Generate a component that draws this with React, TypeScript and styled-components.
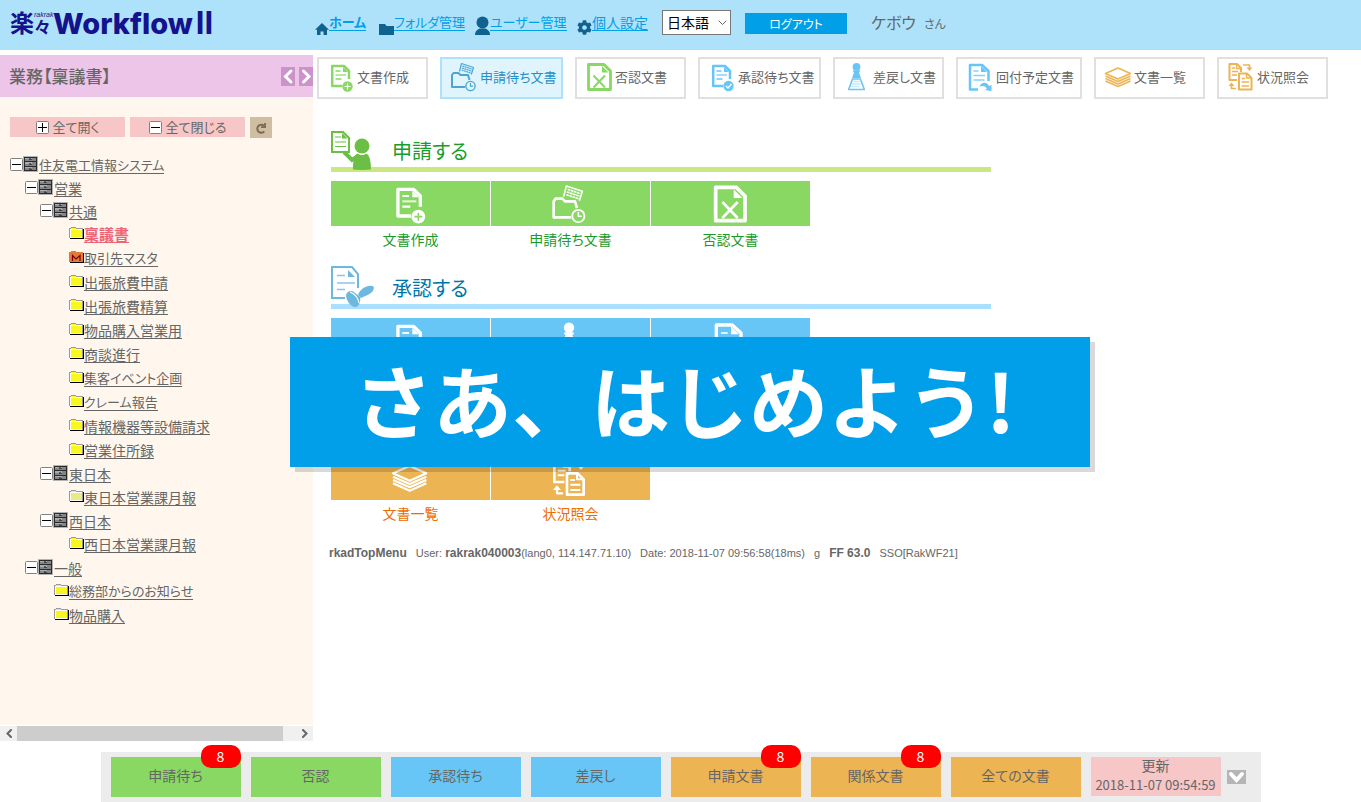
import React from 'react';
import styled, { createGlobalStyle } from 'styled-components';
import { FaCog } from 'react-icons/fa';

const GlobalStyle = createGlobalStyle`
  *, *::before, *::after { box-sizing: border-box; }
  body {
    margin: 0;
    background: #fff;
    color: #666;
    font: 14px/20px "Noto Sans CJK JP", sans-serif;
    font-feature-settings: "palt";
  }
  button, select { font: inherit; font-feature-settings: inherit; color: inherit; border: 0; border-radius: 0; padding: 0; cursor: pointer; }
  ul { list-style: none; margin: 0; padding: 0; }
  h1, h2, p { margin: 0; font-weight: 400; }
  svg { display: block; flex: none; }
`;

const green = '#88d863';
const blue = '#68c6f7';
const orange = '#edb454';
const sky = '#009fe8';
const pink = '#f7c6c7';

const Page = styled.div`
  position: relative;
  min-height: 100vh;
  display: flex;
  flex-direction: column;
`;

/* ---------- header ---------- */
const Header = styled.header`
  height: 50px;
  margin-bottom: 5px;
  padding: 0 10px;
  display: flex;
  align-items: flex-start;
  background: #aee2fb;
`;
const Logo = styled.h1`
  width: 305px;
  display: flex;
  color: #14128c;
  padding-top: 6px;
  white-space: nowrap;
`;
const LogoKanji = styled.span`
  width: 24px;
  font-size: 24px;
  font-weight: 700;
  line-height: 32px;
`;
const LogoSide = styled.span`
  width: 19px;
  display: flex;
  flex-direction: column;
  padding-top: 5px;
  font-size: 17px;
  font-weight: 700;
  line-height: 17px;
`;
const LogoRuby = styled.small`
  font: italic 7px/7px "Liberation Sans", sans-serif;
`;
const LogoWord = styled.span`
  display: flex;
  align-items: baseline;
  gap: 3px;
  font: 800 29px/34px Inter, sans-serif;
  b { font-size: 31px; font-weight: 700; }
`;
const Nav = styled.nav`
  display: flex;
  gap: 13px;
  padding-top: 13px;
`;
const NavLink = styled.a<{ $w: number; $bold?: boolean; $kana?: boolean }>`
  display: flex;
  align-items: flex-end;
  width: ${p => p.$w}px;
  height: 22px;
  color: ${sky};
  font-size: ${p => (p.$kana ? 13 : 14)}px;
  font-weight: ${p => (p.$bold ? 700 : 400)};
  text-decoration: none;
  white-space: nowrap;
  svg { color: #10628f; }
  span {
    line-height: 18px;
    height: 18px;
    margin-bottom: 4px;
    border-bottom: 1px solid ${sky};
  }
`;
const Language = styled.label`
  position: relative;
  margin: 10px 14px 0;
  display: flex;
  align-items: center;
  svg { position: absolute; right: 4px; pointer-events: none; }
`;
const LanguageSelect = styled.select`
  appearance: none;
  width: 69px;
  height: 25px;
  padding: 0 4px 2px;
  border: 1px solid #777;
  background: #fff;
  color: #000;
`;
const Logout = styled.button`
  width: 102px;
  height: 21px;
  margin: 13px 24px 0 0;
  background: ${sky};
  color: #fff;
  font-size: 12px;
  line-height: 18px;
`;
const UserName = styled.p`
  display: flex;
  gap: 8px;
  align-items: baseline;
  padding-top: 12px;
  font-size: 16px;
  small { font-size: 12px; }
`;

/* ---------- side ---------- */
const Middle = styled.div`
  flex: 1;
  display: flex;
`;
const Side = styled.aside`
  width: 313px;
  flex: none;
  display: flex;
  flex-direction: column;
`;
const SideTitle = styled.div`
  height: 42px;
  padding-left: 9px;
  display: flex;
  align-items: center;
  gap: 4px;
  background: #edc5e8;
  h2 { flex: 1; font-size: 17px; font-weight: 500; line-height: 24px; }
`;
const ArrowButton = styled.button`
  width: 14px;
  height: 19px;
  background: #cc93cb;
  color: #fff;
`;
const SideBody = styled.div`
  flex: 1;
  margin-bottom: 1px;
  padding: 20px 10px 0;
  background: #fff7ed;
`;
const TreeTools = styled.div`
  display: flex;
  gap: 5px;
  margin-bottom: 14px;
`;
const ToolButton = styled.button`
  width: 115px;
  height: 20px;
  display: flex;
  align-items: center;
  justify-content: center;
  gap: 4px;
  background: ${pink};
  font-size: 13px;
  line-height: 18px;
`;
const RefreshButton = styled.button`
  width: 22px;
  height: 21px;
  display: grid;
  place-items: center;
  background: #d0bea3;
  color: #7b6a58;
`;
const Branch = styled.ul`
  margin-top: -1px;
  padding-left: 15px;
`;
const TreeRow = styled.div<{ $leaf?: boolean }>`
  display: flex;
  align-items: center;
  height: 24px;
  padding-left: ${p => (p.$leaf ? 14 : 0)}px;
  white-space: nowrap;
`;
const Toggle = styled.button`
  width: 13px;
  height: 15px;
  background: none;
`;
const TreeLink = styled.a<{ $active?: boolean; $leaf?: boolean; $kana?: boolean }>`
  margin-left: ${p => (p.$leaf ? 0 : 1)}px;
  height: 18px;
  margin-top: 1px;
  line-height: 18px;
  color: ${p => (p.$active ? '#ee6477' : '#666')};
  font-size: ${p => (p.$active ? 15 : p.$kana ? 13 : 14)}px;
  font-weight: ${p => (p.$active ? 700 : 400)};
  text-decoration: none;
  border-bottom: 1px solid;
`;
const ScrollBar = styled.div`
  height: 15px;
  display: flex;
  background: #f0f0f0;
`;
const ScrollArrow = styled.button`
  width: 17px;
  display: grid;
  place-items: center;
  background: none;
`;
const ScrollTrack = styled.div`
  flex: 1;
  padding-right: 13px;
`;
const ScrollThumb = styled.div`
  height: 100%;
  background: #cdcdcd;
`;

/* ---------- main ---------- */
const Main = styled.main`
  flex: 1;
  min-width: 0;
  padding: 2px 4px 0;
`;
const Toolbar = styled.div`
  display: flex;
  gap: 12px;
  margin-bottom: 29px;
`;
const ToolbarButton = styled.button<{ $w: number; $active?: boolean }>`
  width: ${p => p.$w}px;
  height: 42px;
  display: flex;
  flex: none;
  align-items: center;
  padding: 0 0 2px 8px;
  border: 2px solid ${p => (p.$active ? '#ade2fb' : '#e0e0e0')};
  background: ${p => (p.$active ? '#e0f4fe' : '#fff')};
  color: ${p => (p.$active ? '#2590c8' : '#666')};
  font-size: 13px;
  white-space: nowrap;
`;
const IconTint = styled.span<{ $color: string }>`
  color: ${p => p.$color};
`;
const Section = styled.section`
  max-width: 674px;
  padding-left: 14px;
  margin-bottom: 11px;
`;
const SectionHead = styled.div<{ $line: string; $color: string }>`
  display: flex;
  align-items: flex-end;
  height: 44px;
  margin-bottom: 9px;
  border-bottom: 5px solid ${p => p.$line};
  h2 { color: ${p => p.$color}; font-size: 20px; line-height: 32px; }
`;
const SectionIcon = styled.span`
  width: 61px;
  margin-bottom: -3px;
`;
const Cards = styled.div`
  display: flex;
  gap: 1px;
`;
const Card = styled.a<{ $bg: string; $color: string }>`
  width: 159px;
  height: 73px;
  color: ${p => p.$color};
  line-height: 26px;
  text-align: center;
  text-decoration: none;
  > span {
    display: flex;
    align-items: center;
    justify-content: center;
    height: 45px;
    background: ${p => p.$bg};
    color: #fff;
  }
`;
const Meta = styled.p`
  display: flex;
  align-items: baseline;
  gap: 9px;
  padding: 4px 12px 0;
  font: 11px/20px "Liberation Sans", sans-serif;
  white-space: nowrap;
  b { font-size: 12px; }
`;

/* ---------- banner ---------- */
const Banner = styled.div`
  position: absolute;
  top: 337px;
  left: 290px;
  width: 800px;
  height: 130px;
  padding-left: 64px;
  background: #019fe9;
  box-shadow: 5px 5px 0 rgba(0, 0, 0, 0.15);
  color: #fff;
  font-size: 79px;
  font-weight: 700;
  font-feature-settings: normal;
  line-height: 124px;
  white-space: nowrap;
`;

/* ---------- footer ---------- */
const Footer = styled.footer`
  display: flex;
  justify-content: center;
  padding-top: 11px;
`;
const FooterBar = styled.div`
  width: 1160px;
  height: 50px;
  padding: 5px 10px;
  display: flex;
  gap: 10px;
  background: #ececec;
`;
const StatusButton = styled.button<{ $bg: string }>`
  position: relative;
  width: 130px;
  height: 40px;
  background: ${p => p.$bg};
  padding-bottom: 4px;
`;
const Badge = styled.span`
  position: absolute;
  top: -12px;
  right: 0;
  width: 40px;
  height: 23px;
  border-radius: 10px;
  background: #f00;
  color: #fff;
  line-height: 22px;
`;
const UpdateButton = styled.button`
  width: 130px;
  height: 39px;
  display: flex;
  flex-direction: column;
  align-items: center;
  background: ${pink};
  line-height: 16px;
  time { font-size: 13px; line-height: 24px; white-space: nowrap; }
`;
const CollapseButton = styled.button`
  align-self: center;
  width: 19px;
  height: 14px;
  margin-left: -4px;
  background: #b5b5b5;
  color: #fff;
`;

/* ---------- icons ---------- */
type IconName = 'create' | 'pending' | 'denied' | 'approve' | 'sendback' | 'route' | 'list' | 'status';

const sheet = (
  <>
    <path d="M15 24H5.200V4H17l5 5v8" strokeWidth="2.500" />
    <path d="M16 5v5H21z" fill="currentColor" stroke="none" />
    <path d="M8.500 9h5M8.500 17h6" strokeWidth="1.600" />
    <path d="M8.500 13h10.500" strokeWidth="1.600" opacity=".75" />
  </>
);

const drawings: Record<IconName, React.ReactNode> = {
  create: (
    <>
      {sheet}
      <circle cx="20.500" cy="24.500" r="5.200" fill="currentColor" stroke="none" />
      <path className="cut" d="M20.500 21.500v6M17.500 24.500h6" />
    </>
  ),
  approve: (
    <>
      {sheet}
      <circle cx="20.500" cy="24" r="5.200" fill="currentColor" stroke="none" />
      <path className="cut" d="M18 24l2 2 3.500-4" />
    </>
  ),
  pending: (
    <>
      <path d="M15 25H2V13l1.500-2h5l2 2H18l1.500 5" strokeWidth="2" />
      <path d="M9.500 9.500L11.500 1.500l12 4-2.200 7" strokeWidth="1.200" />
      <path d="M12.500 4l9.500 3.200M12 6l9.500 3.200M11.500 8l9.500 3.200" strokeWidth="1.200" strokeDasharray="2 .4" />
      <circle cx="20.500" cy="24" r="4.600" strokeWidth="1.400" />
      <path d="M20.500 21v3.200H23" strokeWidth="1.200" />
    </>
  ),
  denied: (
    <>
      <path d="M3.500 2.500H19l6.500 6.500v18.500h-22z" strokeWidth="2.800" />
      <path d="M17 4v6.500h6.500z" fill="currentColor" stroke="none" />
      <path d="M8.500 13.500l11.500 12M20 13.500l-11.500 12" strokeWidth="2" />
    </>
  ),
  sendback: (
    <>
      <circle cx="13.500" cy="5" r="3.900" fill="currentColor" stroke="none" />
      <path d="M10 8.500h7v1.500l-1 .5 2 5.500H9l2-5.500-1-.5z" fill="currentColor" stroke="none" />
      <path d="M9.500 17h8l3.800 10.500H5.700z" strokeWidth="1.600" />
      <path d="M10 19.500h7M9 22h9M8.500 24.500h8" strokeWidth="1.500" opacity=".4" />
    </>
  ),
  route: (
    <>
      <path d="M12 27.500H4V3h12l6.500 6v10" strokeWidth="2.500" />
      <path d="M15 4v6h6z" fill="currentColor" stroke="none" />
      <path d="M7.500 9h5M7.500 13.500H19M7.500 18h11" strokeWidth="1.500" opacity=".8" />
      <path d="M13.500 24.500c2-4.500 7-5 9.500-.5l2.500-1v6l-6.500-1 2-1.500c-2-3-5-3-7.500-2z" fill="currentColor" stroke="none" />
    </>
  ),
  list: (
    <>
      <path d="M14 6L26.500 11.500 14 17 1.500 11.500z" strokeWidth="1.600" />
      <path d="M1.500 14L14 19.500 26.500 14M1.500 16.500L14 22l12.500-5.500M1.500 19L14 24.500 26.500 19" strokeWidth="1.600" />
    </>
  ),
  status: (
    <>
      <path d="M10 18H2.500V2H10l4 4v4" strokeWidth="2" />
      <path d="M9.500 2v4.500H14" strokeWidth="1.500" />
      <path d="M5 6h3M5 9.500h6M5 13h5" strokeWidth="1.500" />
      <path d="M12 11.500h8l4.500 4.500v11.500H12z" strokeWidth="2" />
      <path d="M19.500 11.500V16h5" strokeWidth="1.500" />
      <path d="M14.500 16.500H18M14.500 20h7.500M14.500 24h7.500" strokeWidth="1.500" />
      <path d="M16 3h6.500v3M9 26.500H4.500V23" strokeWidth="1.700" />
      <path d="M19.500 5.500h6l-3 3.500zM1.500 24h6l-3-3.500z" fill="currentColor" stroke="none" />
    </>
  ),
};

const DocSvg = styled.svg<{ $cut: string }>`
  fill: none;
  stroke: currentColor;
  stroke-linejoin: round;
  .cut { stroke: ${p => p.$cut}; stroke-width: 1.2px; }
`;
const DocIcon = ({ name, size, cut = '#fff' }: { name: IconName; size: number; cut?: string }) => (
  <DocSvg $cut={cut} width={size} height={size} viewBox="0 0 30 30">{drawings[name]}</DocSvg>
);

const Box = ({ plus }: { plus?: boolean }) => (
  <svg width="13" height="13" viewBox="0 0 13 13" fill="none">
    <rect x=".5" y=".5" width="12" height="12" rx="1" fill="#fff" stroke="#808080" />
    <path d={plus ? 'M2 6.500h9M6.500 2v9' : 'M2 6.500h9'} stroke="#000" />
  </svg>
);
const Cabinet = () => (
  <svg width="15" height="16" viewBox="0 0 15 16" shapeRendering="crispEdges">
    <path fill="#b4b4b4" d="M0 0h15v16H0z" />
    <path fill="#2a2a2a" d="M1 1h13v14H1z" />
    <path fill="#858585" d="M2 2h11v3H2zM2 6h11v4H2zM2 11h11v3H2z" />
    <path fill="#adadad" d="M2 2h7v1H2zM2 6h7v2H2zM2 11h7v1H2z" />
    <path fill="#444" d="M6 3h3v1H6zM6 8h3v1H6zM6 13h3v1H6z" />
    <path fill="#47607f" d="M6 2h2v1H6zM6 7h2v1H6zM6 12h2v1H6z" />
  </svg>
);
const Folder = () => (
  <svg width="15" height="14" viewBox="0 0 15 14" shapeRendering="crispEdges">
    <defs>
      <pattern id="dither" width="2" height="2" patternUnits="userSpaceOnUse">
        <path fill="#fcfa20" d="M0 0h2v2H0z" />
        <path fill="#e8e680" d="M0 0h1v1H0zM1 1h1v1H1z" />
      </pattern>
    </defs>
    <path fill="#000" d="M1 12h13V3h1v10H1z" />
    <path fill="#999" d="M0 2h2V1h5v1h7v10H0z" />
    <path fill="#fff" d="M1 3h12v9H1z" />
    <path fill="url(#dither)" d="M2 2h5v1H2zM2 4h11v7H2z" />
  </svg>
);
const MasterFolder = () => (
  <svg width="15" height="14" viewBox="0 0 15 14">
    <path fill="#000" d="M1 12h13V3h1v10H1z" />
    <path fill="#e07b39" d="M0 2h2V1h5v1h7v10H0z" />
    <path fill="none" stroke="#7d0000" strokeWidth="1.200" d="M3.500 11V5.500L7 9l4-3.500V11" />
  </svg>
);
const Chevron = ({ w, h, d, sw }: { w: number; h: number; d: string; sw: number }) => (
  <svg width={w} height={h} viewBox={`0 0 ${w} ${h}`} fill="none" stroke="currentColor" strokeWidth={sw} strokeLinecap="round">
    <path d={d} />
  </svg>
);
const HomeIcon = () => (
  <svg width="14" height="12" viewBox="0 0 14 12" fill="currentColor">
    <path d="M7 0l7 6.800h-2V12H8.500V8.500h-3V12H2V6.800H0z" />
  </svg>
);
const NavFolderIcon = () => (
  <svg width="15" height="12" viewBox="0 0 15 12" fill="currentColor">
    <path d="M0 1h6l1.500 2H15v9H0z" />
  </svg>
);
const PersonIcon = () => (
  <svg width="15" height="19" viewBox="0 0 15 19" fill="currentColor">
    <circle cx="7.500" cy="6.500" r="6" />
    <path d="M0 19c0-4 2.500-5.500 4.500-6.500h6c2 1 4.500 2.500 4.500 6.500z" />
  </svg>
);
const ApplyIcon = () => (
  <svg width="41" height="39" viewBox="0 0 41 39" fill="none" stroke="#6cbf45">
    <path d="M1 1h11l6 6v14H1z" strokeWidth="2" />
    <path d="M11 2v5.500h5.500z" fill="#6cbf45" stroke="none" />
    <path d="M4 6h6M4 11h11M4 15.500h11" strokeWidth="1.200" />
    <path d="M13 21l8 8 6-4" strokeWidth="4" />
    <circle cx="31" cy="15" r="7.500" fill="#6cbf45" stroke="none" />
    <path d="M22 38.500c0-9 1-15 5-16 2 2 6 2 8 0 4 1 5 9 5 16-5 .7-13 .7-18 0z" fill="#6cbf45" stroke="none" />
  </svg>
);
const ApproveIcon = () => (
  <svg width="44" height="41" viewBox="0 0 44 41" fill="none" stroke="#6cb8df">
    <path d="M14 32H1V1h20l6 7v14" strokeWidth="2" />
    <path d="M17 4v7h7z" fill="#6cb8df" stroke="none" />
    <path d="M6 9.500h8M6 17h18M6 23.500h8" strokeWidth="1.300" opacity=".8" />
    <path d="M27 29c2-6 9-10 14-9 3 0 2 4 0 6-3 3-8 4-11 6z" fill="#6cb8df" stroke="none" />
    <path d="M15 29c1-4 5-5 8-3l6 5c1 4-1 9-4 10-4 1-10-6-10-12z" fill="#6cb8df" stroke="none" />
    <path d="M19 26c5 2 8 6 9 11" stroke="#fff" strokeWidth="1.200" />
  </svg>
);

/* ---------- data ---------- */
const tools: { name: IconName; label: string; w: number; color: string; active?: boolean }[] = [
  { name: 'create', label: '文書作成', w: 111, color: green },
  { name: 'pending', label: '申請待ち文書', w: 123, color: '#4aa5d4', active: true },
  { name: 'denied', label: '否認文書', w: 111, color: green },
  { name: 'approve', label: '承認待ち文書', w: 123, color: blue },
  { name: 'sendback', label: '差戻し文書', w: 111, color: blue },
  { name: 'route', label: '回付予定文書', w: 126, color: blue },
  { name: 'list', label: '文書一覧', w: 111, color: orange },
  { name: 'status', label: '状況照会', w: 111, color: orange },
];

const sections: {
  title?: string; bg: string; color: string; line: string; icon?: React.ReactNode;
  items: { name: IconName; label?: string }[];
}[] = [
  {
    title: '申請する', bg: green, color: '#1a9c2c', line: '#c9e87f', icon: <ApplyIcon />,
    items: [
      { name: 'create', label: '文書作成' },
      { name: 'pending', label: '申請待ち文書' },
      { name: 'denied', label: '否認文書' },
    ],
  },
  {
    title: '承認する', bg: blue, color: '#0076a8', line: '#a9dfff', icon: <ApproveIcon />,
    items: [{ name: 'approve' }, { name: 'sendback' }, { name: 'route' }],
  },
  {
    bg: orange, color: '#ee6d00', line: '#f7dcae',
    items: [
      { name: 'list', label: '文書一覧' },
      { name: 'status', label: '状況照会' },
    ],
  },
];

type Node = { label: string; children?: Node[]; active?: boolean; master?: boolean; kana?: boolean };
const tree: Node = {
  label: '住友電工情報システム',
  kana: true,
  children: [
    {
      label: '営業',
      children: [
        {
          label: '共通',
          children: [
            { label: '稟議書', active: true },
            { label: '取引先マスタ', master: true, kana: true },
            { label: '出張旅費申請' },
            { label: '出張旅費精算' },
            { label: '物品購入営業用' },
            { label: '商談進行' },
            { label: '集客イベント企画', kana: true },
            { label: 'クレーム報告', kana: true },
            { label: '情報機器等設備請求' },
            { label: '営業住所録' },
          ],
        },
        { label: '東日本', children: [{ label: '東日本営業課月報' }] },
        { label: '西日本', children: [{ label: '西日本営業課月報' }] },
      ],
    },
    { label: '一般', children: [{ label: '総務部からのお知らせ', kana: true }, { label: '物品購入' }] },
  ],
};

const statuses = [
  { label: '申請待ち', bg: green, count: 8 },
  { label: '否認', bg: green },
  { label: '承認待ち', bg: blue },
  { label: '差戻し', bg: blue },
  { label: '申請文書', bg: orange, count: 8 },
  { label: '関係文書', bg: orange, count: 8 },
  { label: '全ての文書', bg: orange },
];

const TreeNode = ({ node }: { node: Node }) => {
  const leaf = !node.children;
  return (
    <li>
      <TreeRow $leaf={leaf}>
        {!leaf && <Toggle aria-label={`${node.label}を閉じる`}><Box /></Toggle>}
        {leaf ? (node.master ? <MasterFolder /> : <Folder />) : <Cabinet />}
        <TreeLink href="#" $active={node.active} $leaf={leaf} $kana={node.kana}>{node.label}</TreeLink>
      </TreeRow>
      {node.children && (
        <Branch>{node.children.map(child => <TreeNode key={child.label} node={child} />)}</Branch>
      )}
    </li>
  );
};

export default function App() {
  return (
    <Page>
      <GlobalStyle />
      <Header>
        <Logo>
          <LogoKanji>楽</LogoKanji>
          <LogoSide><LogoRuby>rakrak</LogoRuby>々</LogoSide>
          <LogoWord>Workflow<b>II</b></LogoWord>
        </Logo>
        <Nav>
          <NavLink href="#" $w={51} $bold $kana><HomeIcon /><span>ホーム</span></NavLink>
          <NavLink href="#" $w={83} $kana><NavFolderIcon /><span>フォルダ管理</span></NavLink>
          <NavLink href="#" $w={89} $kana><PersonIcon /><span>ユーザー管理</span></NavLink>
          <NavLink href="#" $w={71}><FaCog size={15} /><span>個人設定</span></NavLink>
        </Nav>
        <Language>
          <LanguageSelect aria-label="言語" defaultValue="ja">
            <option value="ja">日本語</option>
          </LanguageSelect>
          <Chevron w={9} h={6} d="M1 1l3.500 3.500L8 1" sw={1} />
        </Language>
        <Logout>ログアウト</Logout>
        <UserName>ケボウ<small>さん</small></UserName>
      </Header>

      <Middle>
        <Side>
          <SideTitle>
            <h2>業務【稟議書】</h2>
            <ArrowButton aria-label="前へ"><Chevron w={14} h={19} d="M10 4L4.500 9.500 10 15" sw={3} /></ArrowButton>
            <ArrowButton aria-label="次へ"><Chevron w={14} h={19} d="M4.500 4L10 9.500 4.500 15" sw={3} /></ArrowButton>
          </SideTitle>
          <SideBody>
            <TreeTools>
              <ToolButton><Box plus />全て開く</ToolButton>
              <ToolButton><Box />全て閉じる</ToolButton>
              <RefreshButton aria-label="再読み込み">
                <svg width="12" height="12" viewBox="0 0 12 12" fill="none" stroke="currentColor" strokeWidth="2">
                  <path d="M9.300 9.300A4 4 0 1 1 9 3.700" />
                  <path d="M10 1v4.200H6" strokeWidth="1.800" />
                </svg>
              </RefreshButton>
            </TreeTools>
            <ul><TreeNode node={tree} /></ul>
          </SideBody>
          <ScrollBar>
            <ScrollArrow aria-label="左へスクロール"><Chevron w={6} h={9} d="M5 1L1.500 4.500 5 8" sw={2} /></ScrollArrow>
            <ScrollTrack><ScrollThumb /></ScrollTrack>
            <ScrollArrow aria-label="右へスクロール"><Chevron w={6} h={9} d="M1 1l3.500 3.500L1 8" sw={2} /></ScrollArrow>
          </ScrollBar>
        </Side>

        <Main>
          <Toolbar>
            {tools.map(t => (
              <ToolbarButton key={t.name} $w={t.w} $active={t.active}>
                <IconTint $color={t.color}><DocIcon name={t.name} size={30} /></IconTint>
                {t.label}
              </ToolbarButton>
            ))}
          </Toolbar>
          {sections.map(s => (
            <Section key={s.bg}>
              <SectionHead $line={s.line} $color={s.color}>
                <SectionIcon>{s.icon}</SectionIcon>
                {s.title && <h2>{s.title}</h2>}
              </SectionHead>
              <Cards>
                {s.items.map(i => (
                  <Card key={i.name} href="#" $bg={s.bg} $color={s.color}>
                    <span><DocIcon name={i.name} size={40} cut={s.bg} /></span>
                    {i.label}
                  </Card>
                ))}
              </Cards>
            </Section>
          ))}
          <Meta>
            <b>rkadTopMenu</b>
            <span>User: <b>rakrak040003</b>(lang0, 114.147.71.10)</span>
            <span>Date: 2018-11-07 09:56:58(18ms)</span>
            <span>g</span>
            <b>FF 63.0</b>
            <span>SSO[RakWF21]</span>
          </Meta>
        </Main>
      </Middle>

      <Footer>
        <FooterBar>
          {statuses.map(s => (
            <StatusButton key={s.label} $bg={s.bg}>
              {s.label}
              {s.count && <Badge>{s.count}</Badge>}
            </StatusButton>
          ))}
          <UpdateButton>更新<time>2018-11-07 09:54:59</time></UpdateButton>
          <CollapseButton aria-label="閉じる"><Chevron w={19} h={14} d="M4 4l5.500 6L15 4" sw={4} /></CollapseButton>
        </FooterBar>
      </Footer>

      <Banner>さあ、はじめよう!</Banner>
    </Page>
  );
}
